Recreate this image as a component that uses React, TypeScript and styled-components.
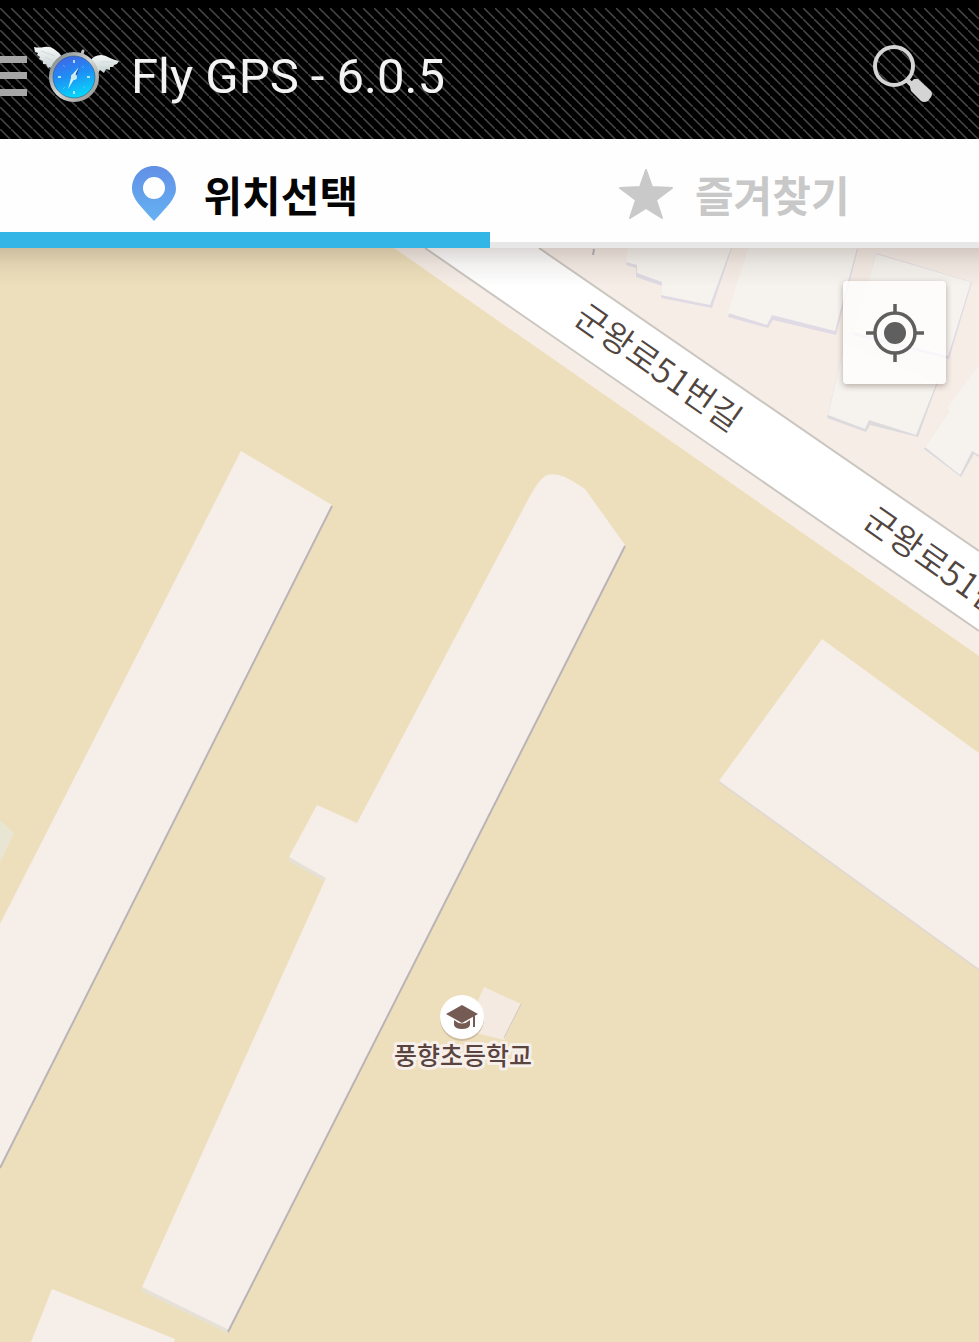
import React, { useState } from "react";
import styled, { createGlobalStyle } from "styled-components";

const GlobalStyle = createGlobalStyle`
  *, *::before, *::after { box-sizing: border-box; }
  html, body { margin: 0; padding: 0; }
  body { background: #eedfbc; font-family: Roboto, "Noto Sans CJK KR", sans-serif; }
  button { margin: 0; padding: 0; border: 0; background: none; font: inherit; cursor: pointer; }
`;

const Screen = styled.div`
  display: flex;
  flex-direction: column;
  min-height: 100vh;
  overflow: hidden;
`;

const Header = styled.header`
  display: flex;
  align-items: center;
  height: 139px;
  padding: 4px 44px 0 0;
  border-top: 8px solid #000;
  background: #000 linear-gradient(45deg, #000 41%, #444 48%, #444 52%, #000 59%);
  background-size: 11px 11px;
`;

const MenuButton = styled.button`
  display: flex;
  width: 27px;
  height: 40px;
  margin-right: 6px;
`;

const Title = styled.h1`
  flex: 1;
  margin: 0 0 0 10px;
  padding-top: 2px;
  color: #f3f3f3;
  font-family: Roboto, sans-serif;
  font-size: 49px;
  font-weight: 400;
  line-height: 60px;
  white-space: nowrap;
`;

const SearchButton = styled.button`
  display: flex;
  width: 64px;
  height: 64px;
`;

const Tabs = styled.nav`
  display: grid;
  grid-template-columns: 1fr 1fr;
  background: #fefefe;
`;

const Tab = styled.button<{ $active: boolean; $gap: number }>`
  display: flex;
  align-items: center;
  justify-content: center;
  gap: ${(p) => p.$gap}px;
  height: 109px;
  box-shadow: inset 0 ${(p) => (p.$active ? "-16px #33b5e5" : "-6px #e7e7e7")};
  color: ${(p) => (p.$active ? "#050505" : "#c8c8c8")};
  font-family: "Noto Sans CJK KR", sans-serif;
  font-size: 42px;
  font-weight: 700;
  line-height: 60px;
`;

const MapArea = styled.main`
  position: relative;
  display: flex;
  flex: 1;
  min-height: 480px;
  background: #eedfbc;

  &::before {
    content: "";
    position: absolute;
    inset: 0 0 auto;
    height: 38px;
    background: linear-gradient(rgba(70, 55, 45, 0.2), rgba(70, 55, 45, 0.07) 45%, rgba(70, 55, 45, 0));
    pointer-events: none;
  }
`;

const MapDrawing = styled.svg`
  flex: 1;
  width: 100%;
  min-width: 0;
`;

const RoadName = styled.text`
  fill: #51463f;
  font-family: "Noto Sans CJK KR", sans-serif;
  font-size: 34px;
  font-weight: 350;
`;

const PlaceName = styled.text`
  fill: #5a4440;
  stroke: #f7efea;
  stroke-width: 6px;
  stroke-linejoin: round;
  paint-order: stroke;
  font-family: "Noto Sans CJK KR", sans-serif;
  font-size: 25px;
  font-weight: 500;
  text-anchor: middle;
`;

const LocateButton = styled.button`
  position: absolute;
  top: 33px;
  right: 33px;
  display: grid;
  place-items: center;
  width: 103px;
  height: 103px;
  border-radius: 4px;
  background: rgba(255, 255, 255, 0.76);
  box-shadow: 0 2px 6px rgba(80, 60, 50, 0.4);
`;

function MenuIcon() {
  return (
    <svg width="27" height="40" viewBox="0 0 27 40" fill="#a6a6a6" aria-hidden="true">
      <path d="M0 0h27v7H0zM0 16h27v7H0zM0 33h27v7H0z" />
    </svg>
  );
}

function Logo() {
  return (
    <svg width="88" height="72" viewBox="0 0 88 72" aria-hidden="true">
      <defs>
        <linearGradient id="face" x1="0.3" y1="0" x2="0.6" y2="1">
          <stop offset="0" stopColor="#4560e6" />
          <stop offset="0.45" stopColor="#1f8df4" />
          <stop offset="1" stopColor="#02e2fa" />
        </linearGradient>
        <linearGradient id="rim" x1="0" y1="0" x2="1" y2="1">
          <stop offset="0" stopColor="#777f80" />
          <stop offset="0.5" stopColor="#d5d5d2" />
          <stop offset="1" stopColor="#8d8d89" />
        </linearGradient>
        <linearGradient id="wing" x1="0" y1="0" x2="0" y2="1">
          <stop offset="0" stopColor="#f5f8f7" />
          <stop offset="1" stopColor="#c6d2d2" />
        </linearGradient>
      </defs>
      <path fill="url(#wing)" d="M1 7Q6 8 11 7 17 6 21 9 26 12 29 17L19 30 17 27 15 28 13 24 10 24 10 21 6 19 7 17 4 15 5 13 2 12z" />
      <path fill="url(#wing)" d="M57 21Q61 15 68 15 72 15 77 18 81 20 86 21L84 24 81 25 80 27 77 27 77 30 73 29 71 33 67 30 65 33 61 32z" />
      <path d="M8 11l14 5M12 17l8 4M68 22l12 0M68 27l7 0" stroke="#cfd9d9" fill="none" />
      <path d="M49 14l1-3" stroke="#bdbdbd" strokeWidth="3" strokeLinecap="round" />
      <circle cx="41" cy="37" r="23" fill="url(#face)" stroke="url(#rim)" strokeWidth="4" />
      <circle cx="41" cy="37" r="21" fill="none" stroke="#225a86" opacity="0.6" />
      <path d="M41 20v3M41 51v3M25 37h3M54 37h3" stroke="#d3f4ff" strokeWidth="2" opacity="0.8" />
      <path d="M30 25l2 2M51 26l-2 2M30 49l2-2M52 48l-2-2" stroke="#8bd2fa" opacity="0.5" />
      <path d="M47 25l-4 13-3 1z" fill="#254f9c" />
      <path d="M46 27l-8 9 2 3zM35 49l3-11 5-2z" fill="#d9f2fb" />
      <circle cx="41" cy="37" r="3" fill="#cbe9ef" />
    </svg>
  );
}

function SearchIcon() {
  return (
    <svg width="64" height="64" viewBox="0 0 64 64" aria-hidden="true">
      <circle cx="23" cy="22" r="19" fill="none" stroke="#d4d4d4" strokeWidth="4" />
      <path d="M35 35l6 6" stroke="#d4d4d4" strokeWidth="5" />
      <path d="M39 43v-4l4-4h4l13 12q2 3 0 6l-3 4q-4 2-7 0l-10-10z" fill="#d4d4d4" />
    </svg>
  );
}

function PinIcon() {
  return (
    <svg width="46" height="56" viewBox="0 0 46 56" aria-hidden="true">
      <defs>
        <linearGradient id="pin" x1="0" y1="0" x2="0" y2="1">
          <stop offset="0" stopColor="#628fe6" />
          <stop offset="1" stopColor="#65b2f2" />
        </linearGradient>
      </defs>
      <path fill="url(#pin)" fillRule="evenodd" d="M23 0C10 0 1 10 1 23c0 9 9 18 22 32 13-14 22-23 22-32C45 10 36 0 23 0zm0 11a11 11 0 1 1 0 22 11 11 0 0 1 0-22z" />
    </svg>
  );
}

function StarIcon() {
  return (
    <svg width="54" height="52" viewBox="0 0 54 52" aria-hidden="true">
      <path d="M27 2l6 17 20 1-16 12 6 18-16-10-16 10 6-18L1 20l20-1z" fill="#c9c9c9" stroke="#c9c9c9" strokeWidth="2" strokeLinejoin="round" />
    </svg>
  );
}

function LocateIcon() {
  return (
    <svg width="58" height="58" viewBox="0 0 58 58" fill="none" stroke="#5f5f5f" aria-hidden="true">
      <circle cx="29" cy="29" r="20" strokeWidth="3.5" />
      <path d="M29 0v9M29 49v9M0 29h9M49 29h9" strokeWidth="3.5" />
      <circle cx="29" cy="29" r="11" fill="#5f5f5f" stroke="none" />
    </svg>
  );
}

function NeighbourhoodMap() {
  return (
    <MapDrawing viewBox="0 248 979 1094" preserveAspectRatio="xMinYMin slice" role="img" aria-label="지도">
      {/* residential block and road */}
      <path d="M394 248L979 656V248z" fill="#f6ede7" />
      <path d="M425 248L979 631V551L539 248z" fill="#fff" />
      <path d="M425 248L979 631M539 248L979 551" fill="none" stroke="#cbc6c0" strokeWidth="2" />

      {/* houses */}
      <g fill="#dfdae4">
        <path d="M628 249L626 265 636 268V277L662 286 661 298 712 308 732 248z" />
        <path d="M748 249L728 317 768 328 773 320 836 335 858 249z" />
        <path d="M876 253L972 282 949 359 853 335z" />
      </g>
      <path d="M845 343L827 418 866 432 870 425 918 437 938 382zM924 449L961 477 974 454 979 457V365z" fill="#dcdadd" />
      <g fill="#f6f3ef">
        <path d="M628 248L626 262 637 265V273L662 282 661 295 710 305 731 248z" />
        <path d="M748 248L728 313 767 325 772 315 835 331 857 248z" />
        <path d="M876 254L971 282 948 356 853 332z" />
        <path d="M845 343L828 415 865 429 869 420 916 435 937 382z" />
        <path d="M979 365L948 407 949 411 925 447 960 475 972 451 979 455z" />
      </g>
      <path d="M594 249l-1 6" stroke="#b9b2c0" strokeWidth="2" />

      {/* school grounds */}
      <path d="M0 820L14 833 0 863z" fill="#e8e5d2" />
      <path d="M241 451L332 505 0 1168V924z" fill="#f6eee8" />
      <path d="M332 506L0 1168" stroke="#b9b4b8" strokeWidth="2" />
      <path d="M142 1287V1291L227 1333 230 1328zM289 857V861L324 881 326 877z" fill="#e5e1d7" />
      <path d="M530 496Q540 478 547 475 556 473 565 477 575 482 585 489L625 545 229 1330 142 1287 326 878 289 857 317 805 357 823z" fill="#f6eee8" />
      <path d="M625 546L228 1332" stroke="#b9b4b8" strokeWidth="2" />
      <path d="M822 639L979 753V970L719 781z" fill="#f6eee8" />
      <path d="M719 782L979 970" stroke="#e2dad0" strokeWidth="2" />
      <path d="M52 1289L175 1339 174 1342H31z" fill="#f6eee8" />
      <path d="M484 987L521 1004 504 1040 465 1030z" fill="#f4eae2" />
      <path d="M521 1004L504 1038" stroke="#cfc5bd" strokeWidth="1" />

      {/* labels */}
      <RoadName transform="translate(572 322) rotate(35)">군왕로51번길</RoadName>
      <RoadName transform="translate(861 525) rotate(35)">군왕로51번길</RoadName>
      <circle cx="462" cy="1019" r="22" fill="#b8a58c" opacity="0.6" />
      <circle cx="462" cy="1017" r="22" fill="#fff" />
      <path d="M446 1014l16-9 16 9-16 9z" fill="#765b54" />
      <path d="M454 1020q8 7 16 0v5q-1 4-8 4t-8-4z" fill="#765b54" />
      <path d="M474 1015v12" stroke="#765b54" strokeWidth="2" />
      <PlaceName x="463" y="1065">풍향초등학교</PlaceName>
    </MapDrawing>
  );
}

export default function App() {
  const [tab, setTab] = useState<"pick" | "favorites">("pick");
  return (
    <Screen>
      <GlobalStyle />
      <Header>
        <MenuButton aria-label="메뉴"><MenuIcon /></MenuButton>
        <Logo />
        <Title>Fly GPS - 6.0.5</Title>
        <SearchButton aria-label="검색"><SearchIcon /></SearchButton>
      </Header>
      <Tabs>
        <Tab $active={tab === "pick"} $gap={26} onClick={() => setTab("pick")}>
          <PinIcon />
          <span>위치선택</span>
        </Tab>
        <Tab $active={tab === "favorites"} $gap={22} onClick={() => setTab("favorites")}>
          <StarIcon />
          <span>즐겨찾기</span>
        </Tab>
      </Tabs>
      <MapArea>
        <NeighbourhoodMap />
        <LocateButton aria-label="현재 위치"><LocateIcon /></LocateButton>
      </MapArea>
    </Screen>
  );
}
